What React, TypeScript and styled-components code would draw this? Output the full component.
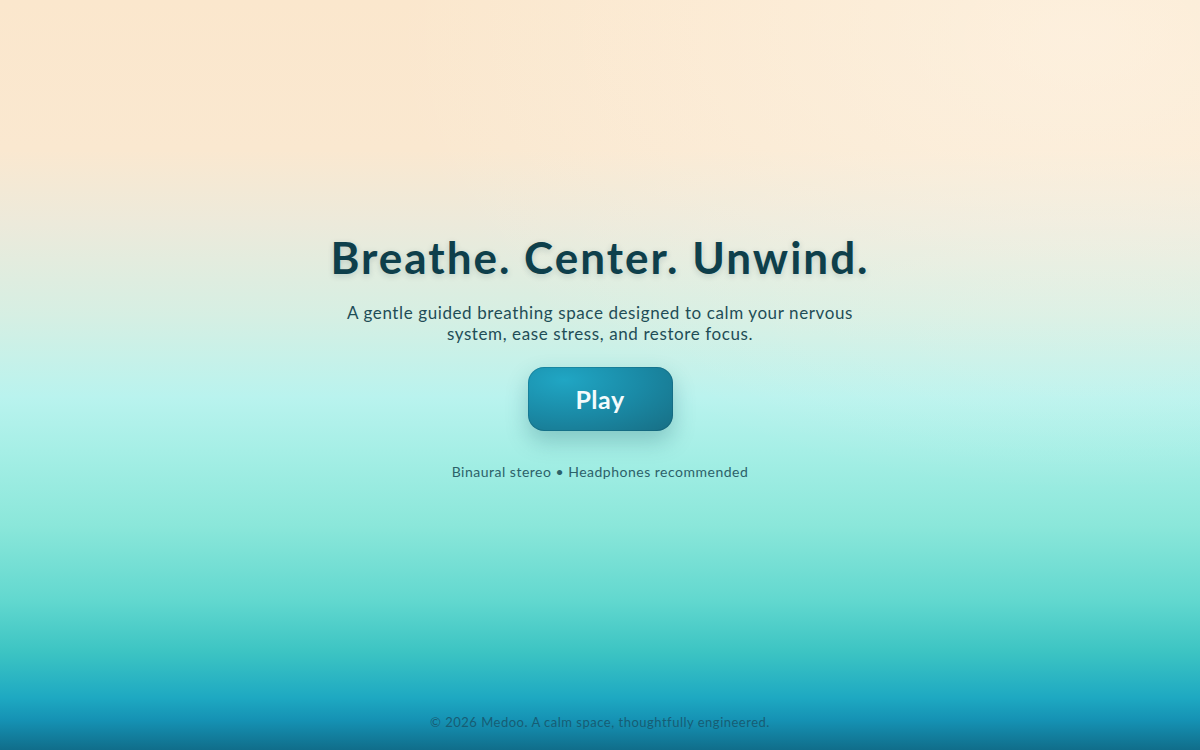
import React from "react";
import styled, { createGlobalStyle } from "styled-components";

const GlobalStyle = createGlobalStyle`
  html, body {
    margin: 0;
    padding: 0;
    height: 100%;
  }
  body {
    font-family: Lato, "Open Sans", sans-serif;
  }
  #root {
    height: 100%;
  }
`;

const Page = styled.div`
  position: relative;
  width: 100%;
  height: 100vh;
  min-height: 750px;
  display: flex;
  flex-direction: column;
  align-items: center;
  overflow: hidden;
  background: linear-gradient(
    180deg,
    #fbe7cd 0%,
    #fae8d0 20%,
    #eceadb 30%,
    #d6efe3 42%,
    #b9f3ee 53%,
    #a6efe6 60%,
    #8be7da 70%,
    #62d8cf 80%,
    #3cc4c3 87%,
    #1ea9c2 93%,
    #1592b4 96%,
    #106d8a 100%
  );
  &::before {
    content: "";
    position: absolute;
    inset: 0;
    background: radial-gradient(
      ellipse at 90% 5%,
      rgba(255, 250, 240, 0.45) 0%,
      rgba(255, 250, 240, 0) 45%
    );
    pointer-events: none;
  }
`;

const Hero = styled.main`
  position: relative;
  flex: 1;
  display: flex;
  flex-direction: column;
  align-items: center;
  padding-top: 231px;
`;

const Title = styled.h1`
  margin: 0;
  font-size: 44px;
  font-weight: 700;
  letter-spacing: 2px;
  color: #0e3f4b;
  text-shadow: 0 2px 6px rgba(14, 63, 75, 0.18);
  line-height: 1.2;
`;

const Subtitle = styled.p`
  margin: 18px 0 0;
  width: 540px;
  text-align: center;
  font-size: 17px;
  line-height: 21px;
  letter-spacing: 0.6px;
  color: #1f4d57;
`;

const PlayButton = styled.button`
  margin-top: 23px;
  width: 145px;
  height: 64px;
  border: none;
  border-radius: 16px;
  cursor: pointer;
  font-family: inherit;
  font-size: 25px;
  font-weight: 700;
  letter-spacing: 0.5px;
  color: #f4fbfc;
  background: radial-gradient(
    ellipse at 25% 20%,
    #20a6c4 0%,
    #1a8aa6 50%,
    #176e84 100%
  );
  box-shadow: 0 10px 22px rgba(20, 90, 100, 0.28),
    inset 0 0 0 1px rgba(10, 70, 90, 0.25);
`;

const Caption = styled.p`
  margin: 32px 0 0;
  font-size: 14px;
  letter-spacing: 0.5px;
  color: #2c6169;
`;

const Footer = styled.footer`
  position: relative;
  padding-bottom: 20px;
  font-size: 13px;
  letter-spacing: 0.5px;
  color: #175d74;
`;

export default function App() {
  return (
    <>
      <GlobalStyle />
      <Page>
        <Hero>
          <Title>Breathe. Center. Unwind.</Title>
          <Subtitle>
            A gentle guided breathing space designed to calm your nervous
            system, ease stress, and restore focus.
          </Subtitle>
          <PlayButton type="button">Play</PlayButton>
          <Caption>Binaural stereo • Headphones recommended</Caption>
        </Hero>
        <Footer>© 2026 Medoo. A calm space, thoughtfully engineered.</Footer>
      </Page>
    </>
  );
}
